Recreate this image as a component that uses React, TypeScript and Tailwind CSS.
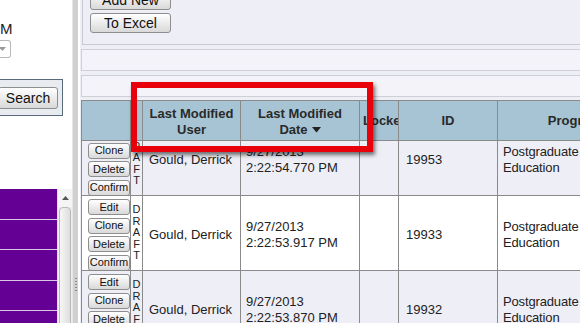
import React from "react";

const btn =
  "flex items-center justify-center rounded-[3px] border border-[#8e8e8e] bg-gradient-to-b from-white to-[#d9d9d9] text-[#111] leading-none";

function RowButtons({ edit = true }: { edit?: boolean }) {
  const items = edit ? ["Edit", "Clone", "Delete", "Confirm"] : ["Clone", "Delete", "Confirm"];
  return (
    <div className="flex flex-col gap-[2.5px] pl-[6px] pt-[3px]">
      {items.map((t) => (
        <div key={t} className={`${btn} h-[16px] w-[42px] text-[11px]`}>
          {t}
        </div>
      ))}
    </div>
  );
}

const cols = "grid grid-cols-[49px_12px_98px_119px_39px_99px_154px]";
const cell = "border-r border-[#8a8a8a] overflow-hidden";

function DataRow({
  bg,
  date,
  id,
}: {
  bg: string;
  date: string;
  id: string;
}) {
  return (
    <div className={`${cols} h-[75px] shrink-0 border-b border-[#8a8a8a] ${bg} text-[#222]`}>
      <div className={cell}>
        <RowButtons />
      </div>
      <div className={`${cell} flex flex-col items-center justify-center text-[11px] leading-[11.5px]`}>
        {"DRAFT".split("").map((c, i) => (
          <span key={i}>{c}</span>
        ))}
      </div>
      <div className={`${cell} flex items-center pl-[6px] pt-[3px] text-[13px]`}>Gould, Derrick</div>
      <div className={`${cell} flex flex-col justify-center pl-[5px] pt-[3px] text-[13px] leading-[16px]`}>
        <span>9/27/2013</span>
        <span>{date}</span>
      </div>
      <div className={cell}></div>
      <div className={`${cell} flex items-center pl-[7px] pt-[3px] text-[13px]`}>{id}</div>
      <div className={`${cell} flex flex-col justify-center pl-[5px] pt-[3px] text-[13px] leading-[16px] tracking-[-0.15px] whitespace-nowrap`}>
        <span>Postgraduate</span>
        <span>Education</span>
      </div>
    </div>
  );
}

export default function App() {
  return (
    <div className="relative flex h-[323px] w-[580px] overflow-hidden bg-white font-['Liberation_Sans',Arial,sans-serif] text-[#222]">
      {/* Left pane */}
      <div className="flex w-[72px] shrink-0 flex-col overflow-hidden bg-white">
        <div className="mt-[21px] h-[15px] shrink-0 text-[15px] leading-[15px] text-[#222]">M</div>
        <div className="mt-[4px] flex h-[18px] w-[11px] shrink-0 items-center justify-start rounded-r-[3px] border-y border-r border-[#b8b8b8] bg-white">
          <svg width="8" height="5" viewBox="0 0 8 5" className="ml-[-1px]">
            <path d="M0 0 L7 0 L3.5 4 Z" fill="#9a9a9a" />
          </svg>
        </div>
        <div className="mt-[21px] flex h-[37px] w-[63px] shrink-0 items-center border-y border-r border-[#5a6b7c] bg-[#e8ebef]">
          <div className={`${btn} ml-[-2px] h-[22px] w-[60px] text-[14px]`}>Search</div>
        </div>
        <div className="mt-[73px] flex shrink-0">
          <div className="flex w-[57px] flex-col">
            {[0, 1, 2, 3, 4].map((i) => (
              <div key={i} className="h-[30.5px] shrink-0 border-b border-[#d8c8e6] bg-[#650094]"></div>
            ))}
          </div>
          <div className="flex w-[15px] flex-col border-l border-[#e0e0e0] bg-[#eeeeee]">
            <div className="flex h-[18px] shrink-0 items-center justify-center bg-[#f4f4f4]">
              <svg width="7" height="4" viewBox="0 0 7 4">
                <path d="M0 4 L3.5 0 L7 4 Z" fill="#555" />
              </svg>
            </div>
            <div className="ml-[1px] mr-[1px] flex-1 rounded-t-[4px] border border-[#b9b9b9] bg-gradient-to-r from-[#f6f6f6] to-[#dedede]"></div>
          </div>
        </div>
      </div>

      {/* Splitter */}
      <div className="flex w-[8px] shrink-0">
        <div className="flex w-[6px] flex-col items-center border-l border-[#e6e6e6] bg-[#d0d0d0]">
          <div className="mt-[278px] flex flex-col gap-[2px]">
            {[0, 1, 2, 3, 4].map((i) => (
              <div key={i} className="h-[1px] w-[2px] bg-[#8a8a8a]"></div>
            ))}
          </div>
        </div>
        <div className="w-[2px] bg-white"></div>
      </div>

      {/* Right pane */}
      <div className="flex min-w-0 flex-1 flex-col bg-[#eeeef7]">
        <div className="ml-[2px] flex h-[45px] shrink-0 flex-col gap-[3px] border-b border-l border-[#c9c9d0] pl-[7px]">
          <div className={`${btn} mt-[-10px] h-[20px] w-[81px] shrink-0 text-[14px]`}>Add New</div>
          <div className={`${btn} h-[20px] w-[81px] shrink-0 text-[14px]`}>To Excel</div>
        </div>
        <div className="ml-[1px] mt-[4px] h-[22px] shrink-0 border-y border-l border-[#cfcfd6] bg-[#f3f3f9]"></div>
        <div className="ml-[1px] mt-[4px] h-[22px] shrink-0 border-y border-l border-[#cfcfd6] bg-[#f3f3f9]"></div>
        <div className="ml-[1px] mt-[3px] flex min-h-0 flex-1 flex-col overflow-hidden border-l border-[#8a8a8a]">
          {/* Header */}
          <div className={`${cols} relative z-10 h-[41px] shrink-0 border-y border-[#8a8a8a] bg-[#a6c4d3] text-[13px] font-bold leading-[16px] text-[#2a2a2a]`}>
            <div className={cell}></div>
            <div className={`${cell} flex items-center pl-[3px]`}>i</div>
            <div className={`${cell} flex flex-col items-center justify-center pt-[2px]`}>
              <span>Last Modified</span>
              <span>User</span>
            </div>
            <div className={`${cell} flex flex-col items-center justify-center pt-[2px]`}>
              <span>Last Modified</span>
              <span className="flex items-center gap-[4px]">
                Date
                <svg width="9" height="6" viewBox="0 0 9 6">
                  <path d="M0 0 L9 0 L4.5 5.5 Z" fill="#222" />
                </svg>
              </span>
            </div>
            <div className={`${cell} flex items-center whitespace-nowrap pl-[3px]`}>Locked</div>
            <div className={`${cell} flex items-center justify-center`}>ID</div>
            <div className={`${cell} flex items-center justify-center whitespace-nowrap`}>Program</div>
          </div>
          {/* Body */}
          <div className="flex flex-col">
            <div className="mt-[-20px]">
              <DataRow bg="bg-[#eeeef7]" date="2:22:54.770 PM" id="19953" />
            </div>
            <DataRow bg="bg-white" date="2:22:53.917 PM" id="19933" />
            <DataRow bg="bg-[#eeeef7]" date="2:22:53.870 PM" id="19932" />
          </div>
        </div>
      </div>

      {/* Red highlight box */}
      <div className="pointer-events-none absolute left-[131px] top-[82px] z-20 h-[70px] w-[242px] border-[6px] border-[#e8000b] shadow-[2px_3px_4px_rgba(0,0,0,0.55)]"></div>
    </div>
  );
}
